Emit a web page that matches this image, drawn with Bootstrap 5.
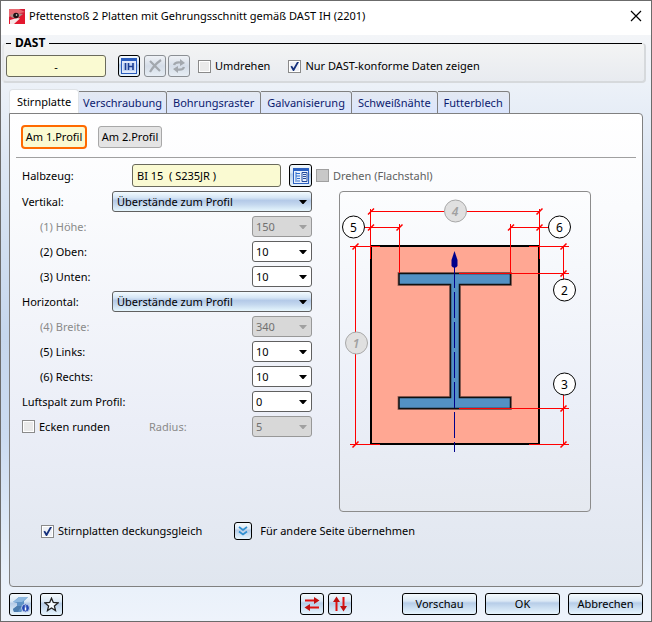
<!DOCTYPE html>
<html lang="de">
<head>
<meta charset="utf-8">
<meta name="viewport" content="width=device-width, initial-scale=1">
<title>Pfettenstoß 2 Platten mit Gehrungsschnitt</title>
<link href="https://cdn.jsdelivr.net/npm/bootstrap@5.3.0/dist/css/bootstrap.min.css" rel="stylesheet">
<style>
  body { font: 11px/16px "Noto Sans", "Open Sans", sans-serif; color: #000; background: #fff; }
  .dialog { min-height: 100vh; border: 1px solid #6b6b6b; background: #fff; }
  .titlebar { height: 34px; padding: 0 8px 4px; }
  .titlebar h1 { font-size: 11px; line-height: 16px; font-weight: 400; }
  .close-x { width: 14px; height: 14px; border: 0; background: none; padding: 0; }
  .client { background: linear-gradient(#f3f5f8 0, #ecf1f8 50px, #dce6f3 130px, #c6d7ed 300px, #cbdbf0 400px, #e8f0fa 540px, #eef3fb 100%); }
  .toolgroup { margin: 0 5px 0 1px; padding: 3px 2px 4px; border: 2px solid #d6d9dc; border-top: 1px solid #e2e4e6; border-left-color: #e6e8ea; border-radius: 4px; background: linear-gradient(#f3f4f4, #e8ebf0); }
  .toolgroup legend { float: none; font-size: 12px; line-height: 16px; font-weight: 700; gap: 4px; }
  .toolgroup legend::before, .toolgroup legend::after { content: ""; height: 1px; background: #000; }
  .toolgroup legend::before { width: 5px; }
  .toolgroup legend::after { flex: 1; }
  .tool-row { padding-top: 1px; }
  .tool-gap { margin-left: 2px; }
  .tool-check { margin-left: 18px; }
  .field { height: 22px; padding: 0 4px; border: 1px solid #6a6a5c; border-radius: 3px; background: #fafad2; font: inherit; color: #000; }
  .field-code { width: 100px; margin-right: 12px; }
  .field-profile { width: 149px; height: 23px; }
  .btn-plain { --bs-btn-padding-x: 0; --bs-btn-padding-y: 0; --bs-btn-font-size: 11px; --bs-btn-line-height: 16px; --bs-btn-border-radius: 3px; --bs-btn-color: #000; --bs-btn-border-color: #000; --bs-btn-disabled-border-color: #8b8f94; --bs-btn-disabled-opacity: 1; display: inline-flex; align-items: center; justify-content: center; height: 22px; background: linear-gradient(#f4fafd 0, #dbe8f5 35%, #b7cde8 45%, #c9dcf0 65%, #e6f4fd 100%); }
  .btn-plain:disabled { background: linear-gradient(#eff2f6, #d5dde8 50%, #e6edf4); }
  .btn-sq { width: 22px; }
  .btn-sq2 { width: 23px; height: 23px; }
  .btn-wide { width: 24px; }
  .btn-mini { width: 18px; height: 18px; }
  .btn-action { width: 75px; }
  .tick[type="checkbox"] { margin: 0; width: 13px; height: 13px; border: 1px solid #8a8a8a; border-radius: 0; box-shadow: inset 0 0 0 1px #fff; background-color: #eaeaea; flex: none; }
  .tick[type="checkbox"]:checked { background-color: #eef0f5; background-size: 11px 11px; background-image: url("data:image/svg+xml,%3csvg xmlns='http://www.w3.org/2000/svg' viewBox='0 0 11 11'%3e%3cpath d='M1.5 5.5 3 4.7 4.5 7 8 1H10L5 10H4Z' fill='%2314307c'/%3e%3c/svg%3e"); }
  .tick[type="checkbox"]:disabled { opacity: 1; border-color: #a0a0a0; background-color: #c8c8c8; box-shadow: none; }
  label.dim { color: #8a8a8a; }
  .tick:disabled ~ label.dim { color: #606060; opacity: 1; }
  .sheets { margin: 6px 8px 0; }
  .sheets .nav-tabs { border: 0; align-items: flex-end; flex-wrap: nowrap; }
  .sheets .nav-link { height: 23px; margin: 0 0 -1px; padding: 3px 6px; font-size: 11px; line-height: 16px; color: #0b1a6e; white-space: nowrap; border: 1px solid #808080; border-left-width: 0; border-radius: 0 3px 0 0; background: linear-gradient(#e4e9f2, #dae5fd); }
  .sheets li:nth-child(2) .nav-link { padding: 3px 4px; }
  .sheets .nav-link.active { height: 25px; padding: 3px 7px; color: #000; border-left-width: 1px; border-bottom-color: #fff; border-radius: 4px 4px 0 0; background: #fff; }
  .sheet { border: 1px solid #808080; border-radius: 0 4px 4px 4px; background: linear-gradient(#fff 0, #fafbfd 20%, #ebeef7 65%, #e0e6ef 100%); padding: 11px 6px 40px; }
  .side-row { gap: 11px; padding-left: 5px; }
  .side-btn { width: 64px; height: 22px; border: 1px solid #a8a8a8; border-radius: 3px; background: #e4e4e4; font: inherit; color: #000; padding: 0; white-space: nowrap; }
  .side-btn.chosen { width: 66px; height: 24px; border: 2px solid #ff6a00; border-radius: 4px; background: #fafad2; }
  .rule { margin: 8px 0 6px; border-top: 1px solid #a0a0a0; opacity: 1; }
  .sheet-body { padding-left: 6px; }
  .form-col { width: 290px; gap: 4px; flex: none; }
  .form-line { height: 21px; }
  .head-line { height: 23px; margin-bottom: 4px; }
  .indent { padding-left: 18px; }
  .caption-w { width: 110px; }
  .round-part { width: 127px; }
  .combo { --bs-form-select-bg-img: url("data:image/svg+xml,%3csvg xmlns='http://www.w3.org/2000/svg' viewBox='0 0 8 4'%3e%3cpath d='M0 0H8L4.500 4H3.500Z'/%3e%3c/svg%3e"); height: 21px; width: 60px; flex: none; margin-left: auto; padding: 0 16px 0 3px; font-size: 11px; line-height: 16px; color: #000; border: 1px solid #606060; border-radius: 3px; background-color: #fff; background-image: var(--bs-form-select-bg-img); background-size: 8px 4px; background-position: right 4px center; }
  .combo-long { width: 200px; padding-left: 4px; background-image: var(--bs-form-select-bg-img), linear-gradient(#f2fbff 0, #d5e5f5 30%, #b4cae8 45%, #c3d7ee 65%, #e6f6fd 100%); background-size: 8px 4px, 100% 100%; background-position: right 4px center, 0 0; }
  .combo:disabled { --bs-form-select-bg-img: url("data:image/svg+xml,%3csvg xmlns='http://www.w3.org/2000/svg' viewBox='0 0 8 4'%3e%3cpath d='M0 0H8L4.500 4H3.500Z' fill='%23a0a0a0'/%3e%3c/svg%3e"); color: #707070; background-color: #d8d8d8; border-color: #989898; }
  .sketch { margin: 0 45px 0 27px; border: 1px solid #8c8c8c; border-radius: 4px; min-width: 0; background: linear-gradient(#fcfdfe, #ebeff8 65%, #e5e9f0); }
  .sketch svg { width: 100%; height: auto; }
  .extra { margin-top: 10px; padding-left: 19px; }
  .extra-btn { margin-left: 32px; }
  .foot { padding: 6px 8px 5px; }
  .swap { margin-right: 50px; }
</style>
</head>
<body>
<main class="dialog d-flex flex-column">
  <header class="titlebar d-flex align-items-center">
    <svg width="16" height="15" viewBox="0 0 16 15" aria-hidden="true">
      <path d="M0 0H16V15H0Z" fill="#d51c35"/>
      <path d="M0 0H10L16 3 7 5 0 8Z" fill="#e86a72"/>
      <path d="M0 11Q5 8 10 8.500L16 5V15H0Z" fill="#e3182e"/>
      <path d="M1 11 8 9 11 9.500 5 15H1Z" fill="#f6e6e6"/>
      <path d="M1 6Q6 3 14 5L9 9Q5 10 2 8Z" fill="#b58c88"/>
      <circle cx="7" cy="6.500" r="2.800" fill="#1c1012"/><circle cx="7.500" cy="6" r=".8" fill="#fff"/>
    </svg>
    <h1 class="m-0 ms-1">Pfettenstoß 2 Platten mit Gehrungsschnitt gemäß DAST IH (2201)</h1>
    <button type="button" class="close-x ms-auto d-flex align-items-center justify-content-center" aria-label="Schließen">
      <svg width="12" height="12" viewBox="0 0 12 12"><path d="M1 1 11 11M11 1 1 11" stroke="#000" stroke-width="1.200"/></svg>
    </button>
  </header>

  <form class="client d-flex flex-column flex-fill">
    <fieldset class="toolgroup">
      <legend class="d-flex align-items-center m-0">DAST</legend>
      <div class="tool-row d-flex align-items-center">
        <input class="field field-code text-center" value="-" aria-label="DAST-Bezeichnung" readonly>
        <button type="button" class="btn btn-plain btn-sq me-1" aria-label="DAST IH wählen">
          <svg width="16" height="16" viewBox="0 0 16 16"><path d="M0 0H16V16H0Z" fill="#2a5cbc"/><path d="M1 3H15V15H1Z" fill="#dfe9fa"/><path d="M2 5H14V13H2Z" fill="#c3d6f5"/><path d="M4.500 5V12M7.500 5V12M12 5V12M7.500 8.500H12" fill="none" stroke="#1c3f94" stroke-width="1.600"/></svg>
        </button>
        <button type="button" class="btn btn-plain btn-sq" disabled aria-label="Löschen">
          <svg width="14" height="14" viewBox="0 0 14 14"><path d="M2 2 12 12M13 1Q6 6 2 13" fill="none" stroke="#a3a8ae" stroke-width="2.200"/></svg>
        </button>
        <button type="button" class="btn btn-plain btn-sq tool-gap" disabled aria-label="Aktualisieren">
          <svg width="14" height="14" viewBox="0 0 14 14"><path d="M2 6Q3 2.500 9 3.500M12 8Q11 11.500 5 10.500" fill="none" stroke="#a3a8ae" stroke-width="2.200"/><path d="M8 0 13 4 8 7ZM6 7 1 10 6 14Z" fill="#a3a8ae"/></svg>
        </button>
        <div class="d-flex align-items-center gap-1 ms-2"><input class="form-check-input tick" type="checkbox" id="flip"><label for="flip">Umdrehen</label></div>
        <div class="tool-check d-flex align-items-center gap-1"><input class="form-check-input tick" type="checkbox" id="conform" checked><label for="conform">Nur DAST-konforme Daten zeigen</label></div>
      </div>
    </fieldset>

    <section class="sheets d-flex flex-column flex-fill">
      <ul class="nav nav-tabs" role="tablist">
        <li><button type="button" class="nav-link active" role="tab" aria-selected="true">Stirnplatte</button></li>
        <li><button type="button" class="nav-link" role="tab">Verschraubung</button></li>
        <li><button type="button" class="nav-link" role="tab">Bohrungsraster</button></li>
        <li><button type="button" class="nav-link" role="tab">Galvanisierung</button></li>
        <li><button type="button" class="nav-link" role="tab">Schweißnähte</button></li>
        <li><button type="button" class="nav-link" role="tab">Futterblech</button></li>
      </ul>
      <div class="sheet flex-fill" role="tabpanel">
        <div class="side-row d-flex align-items-center">
          <button type="button" class="side-btn chosen">Am 1.Profil</button>
          <button type="button" class="side-btn">Am 2.Profil</button>
        </div>
        <hr class="rule">
        <div class="sheet-body">
          <div class="head-line d-flex align-items-center">
            <label class="caption-w" for="stock">Halbzeug:</label>
            <input class="field field-profile" id="stock" value="BI 15  ( S235JR )" readonly>
            <button type="button" class="btn btn-plain btn-sq2 ms-2 me-1" aria-label="Halbzeug wählen">
              <svg width="16" height="16" viewBox="0 0 16 16"><path d="M0 0H16V16H0Z" fill="#2b60c0"/><path d="M1 3H15V15H1Z" fill="#e9f1fc"/><path d="M3 4V14M3 5.500H7M3 8H7M4 10.500H7M4 13H7" stroke="#2f6fd0" fill="none"/><path d="M9 4.500H14V13.500H9ZM10 6.500H13M10 8.500H13M10 10.500H13" stroke="#234a9c" fill="none"/></svg>
            </button>
            <input class="form-check-input tick" type="checkbox" id="turn" disabled>
            <label class="ms-1 dim" for="turn">Drehen (Flachstahl)</label>
          </div>
          <div class="d-flex align-items-start">
            <div class="form-col d-flex flex-column">
              <div class="form-line d-flex align-items-center"><label for="vert">Vertikal:</label><select class="form-select combo combo-long" id="vert"><option>Überstände zum Profil</option></select></div>
              <div class="form-line d-flex align-items-center indent"><label class="dim" for="h1">(1) Höhe:</label><select class="form-select combo" id="h1" disabled><option>150</option></select></div>
              <div class="form-line d-flex align-items-center indent"><label for="o2">(2) Oben:</label><select class="form-select combo" id="o2"><option>10</option></select></div>
              <div class="form-line d-flex align-items-center indent"><label for="u3">(3) Unten:</label><select class="form-select combo" id="u3"><option>10</option></select></div>
              <div class="form-line d-flex align-items-center"><label for="horiz">Horizontal:</label><select class="form-select combo combo-long" id="horiz"><option>Überstände zum Profil</option></select></div>
              <div class="form-line d-flex align-items-center indent"><label class="dim" for="b4">(4) Breite:</label><select class="form-select combo" id="b4" disabled><option>340</option></select></div>
              <div class="form-line d-flex align-items-center indent"><label for="l5">(5) Links:</label><select class="form-select combo" id="l5"><option>10</option></select></div>
              <div class="form-line d-flex align-items-center indent"><label for="r6">(6) Rechts:</label><select class="form-select combo" id="r6"><option>10</option></select></div>
              <div class="form-line d-flex align-items-center"><label for="gap0">Luftspalt zum Profil:</label><select class="form-select combo" id="gap0"><option>0</option></select></div>
              <div class="form-line d-flex align-items-center"><div class="round-part d-flex align-items-center gap-1"><input class="form-check-input tick" type="checkbox" id="round"><label for="round">Ecken runden</label></div><label class="dim" for="rad">Radius:</label><select class="form-select combo" id="rad" disabled><option>5</option></select></div>
            </div>
            <div class="sketch flex-fill">
              <svg class="d-block" viewBox="0 0 250 319" role="img" aria-label="Stirnplatte mit Maßen 1 bis 6" font-family="'Noto Sans', sans-serif" font-size="12" text-anchor="middle">
                <rect x="31" y="54" width="168" height="198" fill="#ffa793" stroke="#000" stroke-width="2"/>
                <path d="M59 81.500H170.500V92.500H119.500V205.500H170.500V216.500H59V205.500H110.500V92.500H59Z" fill="#5391c4" stroke="#5a3a35" stroke-opacity=".5" stroke-width="3"/>
                <path d="M59 81.500H170.500V92.500H119.500V205.500H170.500V216.500H59V205.500H110.500V92.500H59Z" fill="#5391c4" stroke="#111" stroke-width="1.500"/>
                <path d="M114.500 70V260" stroke="#00008b" stroke-dasharray="26 4" fill="none"/>
                <path d="M114.500 59 117.500 68V74L116 75.500H113L111.500 74V68Z" fill="#00008b"/>
                <g stroke="#f00" fill="none">
                  <path d="M31 19.500H199M24 35.500H59M171 35.500H209M30.500 17V67M59.500 32V81M170.500 32V81M199.500 17V67"/>
                  <path d="M15.500 54V253M10 54.500H40M10 252.500H40M189 54.500H229M119 81.500H229M119 216.500H229M189 252.500H229M223.500 54V88M223.500 203V253"/>
                  <path stroke-width="1.500" d="M28 22.500 34 16.500M196.500 22.500 202.500 16.500M28 38.500 34 32.500M56.500 38.500 62.500 32.500M168 38.500 174 32.500M196.500 38.500 202.500 32.500M12.500 57.500 18.500 51.500M12.500 255.500 18.500 249.500M220.500 57.500 226.500 51.500M220.500 84.500 226.500 78.500M220.500 219.500 226.500 213.500M220.500 255.500 226.500 249.500"/>
                </g>
                <g fill="#e0e0e0" stroke="#a8a8a8"><circle cx="115.500" cy="19" r="11"/><circle cx="16.500" cy="151" r="11"/></g>
                <g fill="#fff" stroke="#000"><circle cx="13.500" cy="35" r="11"/><circle cx="219.500" cy="35" r="11"/><circle cx="224.500" cy="98" r="11"/><circle cx="224.500" cy="192" r="11"/></g>
                <g fill="#a0a0a0" font-style="italic" font-weight="600"><text x="115" y="24">4</text><text x="16" y="156">1</text></g>
                <text x="13.500" y="40">5</text><text x="219.500" y="40">6</text><text x="224.500" y="103">2</text><text x="224.500" y="197">3</text>
              </svg>
            </div>
          </div>
          <div class="extra d-flex align-items-center">
            <input class="form-check-input tick" type="checkbox" id="flush" checked>
            <label class="ms-1" for="flush">Stirnplatten deckungsgleich</label>
            <button type="button" class="btn btn-plain btn-mini extra-btn me-2" id="copy" aria-label="Für andere Seite übernehmen">
              <svg width="10" height="10" viewBox="0 0 10 10"><path d="M1 1 5 4 9 1M1 5.500 5 8.500 9 5.500" fill="none" stroke="#2f8fd0" stroke-width="1.700"/></svg>
            </button>
            <label for="copy">Für andere Seite übernehmen</label>
          </div>
        </div>
      </div>
    </section>

    <footer class="foot d-flex align-items-start">
      <button type="button" class="btn btn-plain btn-sq2 me-2" aria-label="Profilinfo">
        <svg width="18" height="17" viewBox="0 0 18 17"><path d="M1 6 7 1H16L13 4 12 5V9L14 11 9 16H2L1 13 5 10V7Z" fill="#5f93c6"/><path d="M1 6 7 1H16L10 6Z" fill="#8db8e0"/><path d="M1 13 5 10H10L7 14 6 16H2Z" fill="#4b7cae"/><circle cx="13.500" cy="12" r="4" fill="#2448b4" stroke="#b8c8e8"/><path d="M13.500 9.500V10.500M13.500 11.300V14.500" stroke="#fff" stroke-width="1.500"/></svg>
      </button>
      <button type="button" class="btn btn-plain btn-sq2" aria-label="Favoriten">
        <svg width="15" height="15" viewBox="0 0 15 15"><path d="M7.500 1.200 9.300 5.500 14 5.900 10.400 8.900 11.500 13.500 7.500 11 3.500 13.500 4.600 8.900 1 5.900 5.700 5.500Z" fill="#f4faff" stroke="#222" stroke-width="1.300"/></svg>
      </button>
      <div class="swap d-flex gap-1 ms-auto">
        <button type="button" class="btn btn-plain btn-wide" aria-label="Horizontal tauschen">
          <svg width="16" height="14" viewBox="0 0 16 14"><path d="M1 3.500H11M15 10.500H5" stroke="#e01010" stroke-width="2"/><path d="M10 0 15.500 3.500 10 7ZM6 7 .5 10.500 6 14Z" fill="#c01010"/></svg>
        </button>
        <button type="button" class="btn btn-plain btn-wide" aria-label="Vertikal tauschen">
          <svg width="14" height="16" viewBox="0 0 14 16"><path d="M3.500 15V5M10.500 1V11" stroke="#e01010" stroke-width="2"/><path d="M0 6 3.500 .5 7 6ZM7 10 10.500 15.500 14 10Z" fill="#c01010"/></svg>
        </button>
      </div>
      <div class="d-flex gap-2">
        <button type="button" class="btn btn-plain btn-action">Vorschau</button>
        <button type="submit" class="btn btn-plain btn-action">OK</button>
        <button type="button" class="btn btn-plain btn-action">Abbrechen</button>
      </div>
    </footer>
  </form>
</main>
<script src="https://cdn.jsdelivr.net/npm/bootstrap@5.3.0/dist/js/bootstrap.bundle.min.js"></script>
</body>
</html>
